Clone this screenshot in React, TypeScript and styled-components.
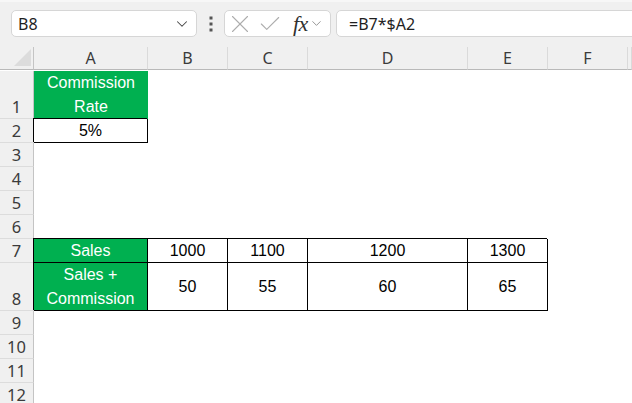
import styled, { createGlobalStyle } from "styled-components";
import { ChevronDown, X, Check } from "lucide-react";

const GlobalStyle = createGlobalStyle`
    html, body {
        margin: 0;
        padding: 0;
        background: #ffffff;
        overflow: hidden;
    }
`;

const Page = styled.div`
    width: 632px;
    height: 403px;
    overflow: hidden;
    display: flex;
    flex-direction: column;
    font-family: "Noto Sans", "Open Sans", sans-serif;
`;

const Toolbar = styled.div`
    height: 47px;
    flex: none;
    background: #f0f0f0;
    border-top: 2px solid #f7f7f7;
    box-sizing: border-box;
    display: flex;
    align-items: flex-start;
    padding: 8px 0 0 11px;
    overflow: hidden;
`;

const Box = styled.div<{ $width: number }>`
    width: ${(p) => p.$width}px;
    flex: none;
    height: 27px;
    box-sizing: border-box;
    background: #ffffff;
    border: 1px solid #d6d6d6;
    border-radius: 5px;
    display: flex;
    align-items: center;
`;

const NameText = styled.span`
    flex: 1;
    padding-left: 6px;
    font-size: 16px;
    color: #1f1f1f;
`;

const Dots = styled.div`
    width: 27px;
    height: 27px;
    flex: none;
    display: flex;
    align-items: center;
    justify-content: center;
`;

const Fx = styled.span`
    font-family: "Liberation Serif", serif;
    font-style: italic;
    font-size: 22px;
    line-height: 24px;
    color: #303030;
    margin: 0 1px 0 10px;
    letter-spacing: -0.5px;
`;

const FormulaText = styled.span`
    padding-left: 12px;
    font-size: 16px;
    color: #1f1f1f;
`;

const Sheet = styled.div`
    display: grid;
    grid-template-columns: 34px 114px 80px 80px 160px 80px 80px 1fr;
    grid-auto-rows: 24px;
`;

const ColHeader = styled.div`
    height: 23px;
    box-sizing: border-box;
    background: #f0f0f0;
    border-bottom: 1px solid #b9b9b9;
    border-right: 1px solid #dadada;
    display: flex;
    align-items: center;
    justify-content: center;
    font-size: 16px;
    color: #3b3b3b;
`;

const Corner = styled(ColHeader)`
    border-right: 1px solid #c4c4c4;
    align-items: flex-end;
    justify-content: flex-end;
    padding: 0 2px 3px 0;
`;

const RowHeader = styled.div<{ $span: number }>`
    grid-row: span ${(p) => p.$span};
    box-sizing: border-box;
    background: #f0f0f0;
    border-right: 1px solid #c4c4c4;
    border-bottom: 1px solid #dcdcdc;
    display: flex;
    align-items: flex-end;
    justify-content: center;
    line-height: 23px;
    font-size: 16.5px;
    color: #3b3b3b;
`;

const Cell = styled.div<{ $span: number; $green?: boolean; $border?: boolean }>`
    grid-row: span ${(p) => p.$span};
    box-sizing: border-box;
    background: ${(p) => (p.$green ? "#00b050" : "#ffffff")};
    color: ${(p) => (p.$green ? "#ffffff" : "#000000")};
    font-family: "Liberation Sans", Arial, sans-serif;
    font-size: 16px;
    line-height: 24px;
    white-space: pre-line;
    text-align: center;
    display: flex;
    align-items: center;
    justify-content: center;
    ${(p) =>
        p.$border &&
        `
        border-right: 1px solid #000;
        border-bottom: 1px solid #000;
        box-shadow: -1px -1px 0 0 #000;
    `}
`;

type CellData = { text: string; green?: boolean; border?: boolean };

type RowData = { n: number; span: number; cells: Record<string, CellData> };

const columns = ["A", "B", "C", "D", "E", "F", ""];

const rows: RowData[] = [
    { n: 1, span: 2, cells: { A: { text: "Commission\nRate", green: true } } },
    { n: 2, span: 1, cells: { A: { text: "5%", border: true } } },
    { n: 3, span: 1, cells: {} },
    { n: 4, span: 1, cells: {} },
    { n: 5, span: 1, cells: {} },
    { n: 6, span: 1, cells: {} },
    {
        n: 7,
        span: 1,
        cells: {
            A: { text: "Sales", green: true, border: true },
            B: { text: "1000", border: true },
            C: { text: "1100", border: true },
            D: { text: "1200", border: true },
            E: { text: "1300", border: true },
        },
    },
    {
        n: 8,
        span: 2,
        cells: {
            A: { text: "Sales +\nCommission", green: true, border: true },
            B: { text: "50", border: true },
            C: { text: "55", border: true },
            D: { text: "60", border: true },
            E: { text: "65", border: true },
        },
    },
    { n: 9, span: 1, cells: {} },
    { n: 10, span: 1, cells: {} },
    { n: 11, span: 1, cells: {} },
    { n: 12, span: 1, cells: {} },
];

function DotsIcon() {
    return (
        <svg width="4" height="16" viewBox="0 0 4 16">
            <rect x="0.5" y="0.5" width="3" height="3" fill="#555" />
            <rect x="0.5" y="6.5" width="3" height="3" fill="#555" />
            <rect x="0.5" y="12.5" width="3" height="3" fill="#555" />
        </svg>
    );
}

function SelectAll() {
    return (
        <svg width="17" height="17" viewBox="0 0 17 17">
            <polygon points="17,0 17,17 0,17" fill="#dcdcdc" />
        </svg>
    );
}

function RowCells({ row }: { row: RowData }) {
    return (
        <>
            <RowHeader $span={row.span}>{row.n}</RowHeader>
            {columns.map((c, i) => {
                const cell = row.cells[c];
                return (
                    <Cell key={i} $span={row.span} $green={cell?.green} $border={cell?.border}>
                        {cell?.text}
                    </Cell>
                );
            })}
        </>
    );
}

export default function App() {
    return (
        <Page>
            <GlobalStyle />
            <Toolbar>
                <Box $width={186}>
                    <NameText>B8</NameText>
                    <ChevronDown size={18} strokeWidth={1.4} color="#444" style={{ marginRight: 5 }} />
                </Box>
                <Dots>
                    <DotsIcon />
                </Dots>
                <Box $width={107}>
                    <X size={30} strokeWidth={0.9} color="#adadad" style={{ marginLeft: 0 }} />
                    <Check size={26} strokeWidth={1} color="#adadad" style={{ marginLeft: 2 }} />
                    <Fx>fx</Fx>
                    <ChevronDown size={15} strokeWidth={1.4} color="#888" />
                </Box>
                <Box $width={320} style={{ marginLeft: 5 }}>
                    <FormulaText>=B7*$A2</FormulaText>
                </Box>
            </Toolbar>
            <Sheet>
                <Corner>
                    <SelectAll />
                </Corner>
                {columns.map((c, i) => (
                    <ColHeader key={i}>{c}</ColHeader>
                ))}
                {rows.map((row) => (
                    <RowCells key={row.n} row={row} />
                ))}
            </Sheet>
        </Page>
    );
}
